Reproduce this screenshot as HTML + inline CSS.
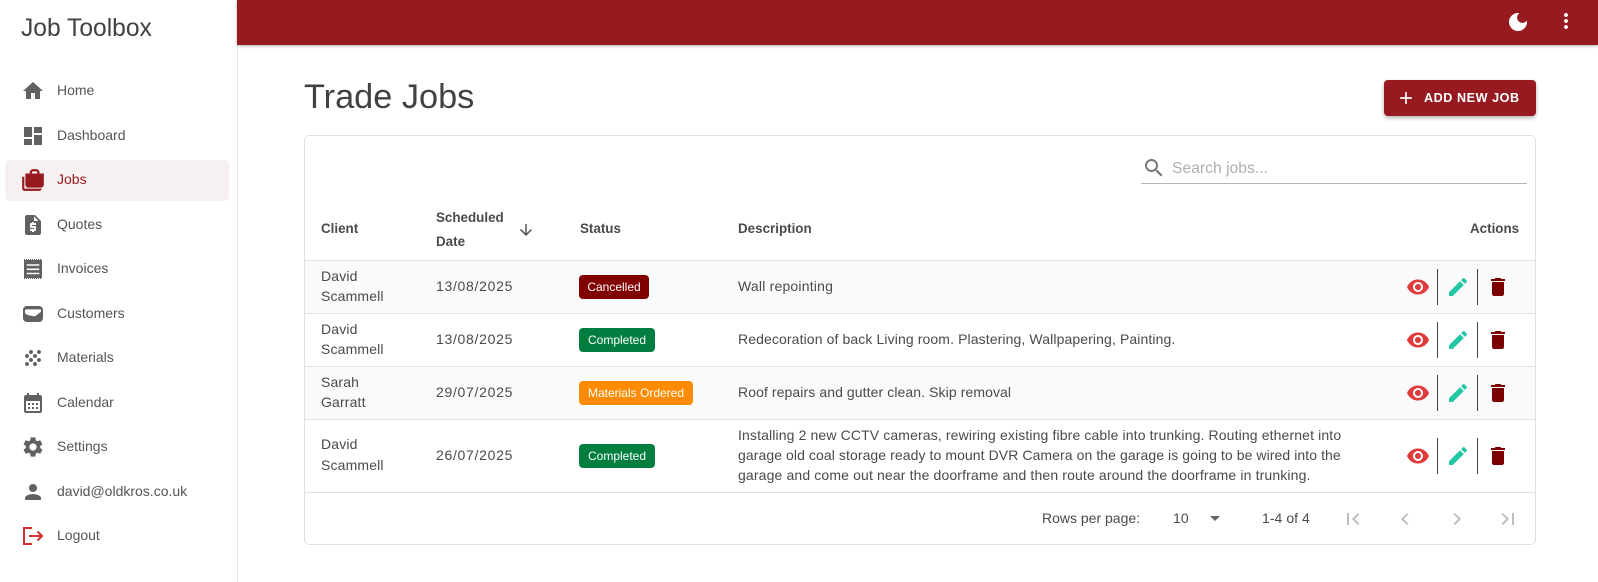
<!DOCTYPE html>
<html lang="en"><head><meta charset="utf-8"><title>Trade Jobs</title>
<style>
html,body{margin:0;padding:0;background:#fff}
body{position:relative;width:1598px;height:582px;overflow:hidden;font-family:"Liberation Sans",sans-serif;color:#424242}
.a,.t,svg{position:absolute}
.t{white-space:nowrap;line-height:20px;font-size:14px}
.n{left:57px;color:#555}
.c{letter-spacing:.15px;color:#4a4a4a}
.h{font-size:13.4px;font-weight:bold;color:#4a4a4a}
.b{height:24px;border-radius:4px;color:#fff;font-size:12px;line-height:24px;text-align:center;white-space:nowrap}
.l{left:305px;width:1230px;height:1px;background:#e0e0e0}
.d{width:1px;height:36px;background:#424242}
.s{background:#fafafa;left:305px;width:1230px}
</style></head><body>
<div class="a" style="left:237px;top:0;width:1px;height:582px;background:#e8e8e8"></div>
<div class="a" style="left:237px;top:0;width:1361px;height:45px;background:#961a1f;box-shadow:0 1px 3px rgba(0,0,0,.3)"></div>
<div class="t" style="left:21px;top:15px;font-size:24.6px;line-height:28px;color:#424242">Job Toolbox</div>
<div class="a" style="left:5px;top:160px;width:224px;height:41px;background:#f6f0f0;border-radius:5px"></div>

<svg style="left:21px;top:79px" width="24" height="24" viewBox="0 0 24 24" fill="#616161"><path d="M10 20v-6h4v6h5v-8h3L12 3 2 12h3v8z"/></svg>
<svg style="left:21px;top:124px" width="24" height="24" viewBox="0 0 24 24" fill="#616161"><path d="M3 13h8V3H3v10zm0 8h8v-6H3v6zm10 0h8V11h-8v10zm0-18v6h8V3h-8z"/></svg>
<svg style="left:20px;top:167px" width="26" height="26" viewBox="0 0 24 24" fill="#961a1f"><path d="M18 6V4l-2-2h-5L9 4v2H5v11s1 2 2 2h13s2-.98 2-2V6h-4zM4 9H2v11c0 1.11.89 2 2 2h14c1.11 0 2-.89 2-2H4V9zm7-4c0-.55.53-1 1-1h3c.46 0 1 .54 1 1v1h-5V5z"/></svg>
<svg style="left:21px;top:213px" width="24" height="24" viewBox="0 0 24 24" fill="#616161"><path d="M14 2H6c-1.1 0-1.99.9-1.99 2L4 20c0 1.1.89 2 1.99 2H18c1.1 0 2-.9 2-2V8l-6-6zm1 10h-4v1h3c.55 0 1 .45 1 1v3c0 .55-.45 1-1 1h-1v1h-2v-1H9v-2h4v-1h-3c-.55 0-1-.45-1-1v-3c0-.55.45-1 1-1h1V9h2v1h2v2zm-2-4V3.5L17.5 8H13z"/></svg>
<svg style="left:21px;top:257px" width="24" height="24" viewBox="0 0 24 24"><rect x="3" y="3" width="18" height="18" fill="#616161"/><path d="M3 2.5H21M3 21.5H21" stroke="#616161" stroke-width="1" stroke-dasharray="1 1" fill="none"/><path d="M5.7 8H18.3M5.7 12.3H18.3M5.7 16.5H18.3" stroke="#fff" stroke-width="1.6" fill="none"/></svg>
<svg style="left:21px;top:302px" width="24" height="24" viewBox="0 0 24 24"><rect x="2" y="4" width="20" height="16" rx="4" fill="#616161"/><path d="M4 8.4C4 7.6 4.6 7.4 5 7.4H19C19.5 7.4 20 7.7 20 8.4V9.6L14 14.4C9 13.6 4 13 4 10.4Z" fill="#fff"/></svg>
<svg style="left:21px;top:346px" width="24" height="24" viewBox="0 0 24 24" fill="#616161"><path d="M10 12c-1.1 0-2 .9-2 2s.9 2 2 2 2-.9 2-2-.9-2-2-2zM6 8c-1.1 0-2 .9-2 2s.9 2 2 2 2-.9 2-2-.9-2-2-2zm0 8c-1.1 0-2 .9-2 2s.9 2 2 2 2-.9 2-2-.9-2-2-2zm12-8c1.1 0 2-.9 2-2s-.9-2-2-2-2 .9-2 2 .9 2 2 2zm-4 8c-1.1 0-2 .9-2 2s.9 2 2 2 2-.9 2-2-.9-2-2-2zm4-4c-1.1 0-2 .9-2 2s.9 2 2 2 2-.9 2-2-.9-2-2-2zm-4-4c-1.1 0-2 .9-2 2s.9 2 2 2 2-.9 2-2-.9-2-2-2zm-4-4c-1.1 0-2 .9-2 2s.9 2 2 2 2-.9 2-2-.9-2-2-2z"/></svg>
<svg style="left:21px;top:391px" width="24" height="24" viewBox="0 0 24 24" fill="#616161"><path d="M19 4h-1V2h-2v2H8V2H6v2H5c-1.11 0-1.99.9-1.99 2L3 20c0 1.1.89 2 2 2h14c1.1 0 2-.9 2-2V6c0-1.1-.9-2-2-2zm0 16H5V10h14v10zM9 14H7v-2h2v2zm4 0h-2v-2h2v2zm4 0h-2v-2h2v2zm-8 4H7v-2h2v2zm4 0h-2v-2h2v2zm4 0h-2v-2h2v2z"/></svg>
<svg style="left:21px;top:435px" width="24" height="24" viewBox="0 0 24 24" fill="#616161"><path d="M19.14 12.94c.04-.3.06-.61.06-.94 0-.32-.02-.64-.07-.94l2.03-1.58c.18-.14.23-.41.12-.61l-1.92-3.32c-.12-.22-.37-.29-.59-.22l-2.39.96c-.5-.38-1.03-.7-1.62-.94l-.36-2.54c-.04-.24-.24-.41-.48-.41h-3.84c-.24 0-.43.17-.47.41l-.36 2.54c-.59.24-1.13.57-1.62.94l-2.39-.96c-.22-.08-.47 0-.59.22L2.74 8.87c-.12.21-.08.47.12.61l2.03 1.58c-.05.3-.09.63-.09.94s.02.64.07.94l-2.03 1.58c-.18.14-.23.41-.12.61l1.92 3.32c.12.22.37.29.59.22l2.39-.96c.5.38 1.03.7 1.62.94l.36 2.54c.05.24.24.41.48.41h3.84c.24 0 .44-.17.47-.41l.36-2.54c.59-.24 1.13-.56 1.62-.94l2.39.96c.22.08.47 0 .59-.22l1.92-3.32c.12-.22.07-.47-.12-.61l-2.01-1.58zM12 15.6c-1.98 0-3.6-1.62-3.6-3.6s1.62-3.6 3.6-3.6 3.6 1.62 3.6 3.6-1.62 3.6-3.6 3.6z"/></svg>
<svg style="left:21px;top:480px" width="24" height="24" viewBox="0 0 24 24" fill="#616161"><path d="M12 12c2.21 0 4-1.79 4-4s-1.79-4-4-4-4 1.79-4 4 1.79 4 4 4zm0 2c-2.67 0-8 1.34-8 4v2h16v-2c0-2.66-5.33-4-8-4z"/></svg>
<svg style="left:21px;top:524px" width="24" height="24" viewBox="0 0 24 24" fill="none" stroke="#d32f2f" stroke-width="2"><path d="M11 4H3V20H11M8 12H21M16.5 7.5L21 12L16.5 16.5"/></svg>

<div class="t n" style="top:80px">Home</div>
<div class="t n" style="top:125px">Dashboard</div>
<div class="t n" style="top:169px;color:#961a1f">Jobs</div>
<div class="t n" style="top:214px">Quotes</div>
<div class="t n" style="top:258px">Invoices</div>
<div class="t n" style="top:303px">Customers</div>
<div class="t n" style="top:347px">Materials</div>
<div class="t n" style="top:392px">Calendar</div>
<div class="t n" style="top:436px">Settings</div>
<div class="t n" style="top:481px">david@oldkros.co.uk</div>
<div class="t n" style="top:525px">Logout</div>

<svg style="left:1506px;top:10px" width="24" height="24" viewBox="0 0 24 24" fill="#fff"><path d="M12 3c-4.97 0-9 4.03-9 9s4.03 9 9 9 9-4.03 9-9c0-.46-.04-.92-.1-1.36-.98 1.37-2.58 2.26-4.4 2.26-2.98 0-5.4-2.42-5.4-5.4 0-1.81.89-3.42 2.26-4.4-.44-.06-.9-.1-1.36-.1z"/></svg>
<svg style="left:1554px;top:9px" width="24" height="24" viewBox="0 0 24 24" fill="#fff"><path d="M12 8c1.1 0 2-.9 2-2s-.9-2-2-2-2 .9-2 2 .9 2 2 2zm0 2c-1.1 0-2 .9-2 2s.9 2 2 2 2-.9 2-2-.9-2-2-2zm0 6c-1.1 0-2 .9-2 2s.9 2 2 2 2-.9 2-2-.9-2-2-2z"/></svg>

<div class="t" style="left:304px;top:77px;font-size:34.3px;line-height:40px;color:#424242">Trade Jobs</div>
<div class="a" style="left:1384px;top:80px;width:152px;height:36px;background:#961a1f;border-radius:4px;box-shadow:0 2px 4px rgba(0,0,0,.3)"></div>
<svg style="left:1396px;top:88px" width="20" height="20" viewBox="0 0 24 24" fill="#fff"><path d="M19 13h-6v6h-2v-6H5v-2h6V5h2v6h6v2z"/></svg>
<div class="t" style="left:1424px;top:88px;font-size:12.6px;font-weight:bold;color:#fff;letter-spacing:.55px">ADD NEW JOB</div>

<div class="a" style="left:304px;top:135px;width:1230px;height:408px;border:1px solid #e0e0e0;border-radius:5px"></div>
<svg style="left:1142px;top:156px" width="24" height="24" viewBox="0 0 24 24" fill="#757575"><path d="M15.5 14h-.79l-.28-.27C15.41 12.59 16 11.11 16 9.5 16 5.91 13.09 3 9.5 3S3 5.91 3 9.5 5.91 16 9.5 16c1.61 0 3.09-.59 4.23-1.57l.27.28v.79l5 4.99L20.49 19l-4.99-5zm-6 0C7.01 14 5 11.99 5 9.5S7.01 5 9.5 5 14 7.01 14 9.5 11.99 14 9.5 14z"/></svg>
<div class="t" style="left:1172px;top:159px;font-size:15.7px;color:#aeaeae">Search jobs...</div>
<div class="a" style="left:1141px;top:183px;width:386px;height:1px;background:#b5b5b5"></div>

<div class="t h" style="left:321px;top:219px">Client</div>
<div class="t h" style="left:436px;top:208px">Scheduled</div>
<div class="t h" style="left:436px;top:232px">Date</div>
<svg style="left:517px;top:221px" width="18" height="18" viewBox="0 0 24 24" fill="#555"><path d="M20 12l-1.41-1.41L13 16.17V4h-2v12.17l-5.58-5.59L4 12l8 8 8-8z"/></svg>
<div class="t h" style="left:580px;top:219px">Status</div>
<div class="t h" style="left:738px;top:219px">Description</div>
<div class="t h" style="left:1470px;top:219px">Actions</div>

<div class="a s" style="top:261px;height:53px"></div>
<div class="a s" style="top:367px;height:52px"></div>
<div class="a l" style="top:260px"></div>
<div class="a l" style="top:313px"></div>
<div class="a l" style="top:366px"></div>
<div class="a l" style="top:419px"></div>
<div class="a l" style="top:492px"></div>

<div class="t c" style="left:321px;top:266px">David</div><div class="t c" style="left:321px;top:286px">Scammell</div>
<div class="t c" style="left:436px;top:276px;letter-spacing:.7px">13/08/2025</div>
<div class="a b" style="left:579px;top:275px;width:70px;background:#800000">Cancelled</div>
<div class="t c" style="left:738px;top:276px;letter-spacing:.2px">Wall repointing</div>

<div class="t c" style="left:321px;top:319px">David</div><div class="t c" style="left:321px;top:339px">Scammell</div>
<div class="t c" style="left:436px;top:329px;letter-spacing:.7px">13/08/2025</div>
<div class="a b" style="left:579px;top:328px;width:76px;background:#007e3f">Completed</div>
<div class="t c" style="left:738px;top:329px;letter-spacing:.11px">Redecoration of back Living room. Plastering, Wallpapering, Painting.</div>

<div class="t c" style="left:321px;top:372px">Sarah</div><div class="t c" style="left:321px;top:392px">Garratt</div>
<div class="t c" style="left:436px;top:382px;letter-spacing:.7px">29/07/2025</div>
<div class="a b" style="left:579px;top:381px;width:114px;background:#ff8c00">Materials Ordered</div>
<div class="t c" style="left:738px;top:382px;letter-spacing:.09px">Roof repairs and gutter clean. Skip removal</div>

<div class="t c" style="left:321px;top:434px">David</div><div class="t c" style="left:321px;top:455px">Scammell</div>
<div class="t c" style="left:436px;top:445px;letter-spacing:.7px">26/07/2025</div>
<div class="a b" style="left:579px;top:444px;width:76px;background:#007e3f">Completed</div>
<div class="t c" style="left:738px;top:425px;letter-spacing:.13px">Installing 2 new CCTV cameras, rewiring existing fibre cable into trunking. Routing ethernet into</div>
<div class="t c" style="left:738px;top:445px;letter-spacing:.08px">garage old coal storage ready to mount DVR Camera on the garage is going to be wired into the</div>
<div class="t c" style="left:738px;top:465px;letter-spacing:.14px">garage and come out near the doorframe and then route around the doorframe in trunking.</div>

<svg width="0" height="0" style="left:0;top:0"><defs>
<symbol id="eye" viewBox="0 0 24 24"><path fill="#e03a3a" d="M12 4.5C7 4.5 2.73 7.61 1 12c1.73 4.39 6 7.5 11 7.5s9.27-3.11 11-7.5c-1.73-4.39-6-7.5-11-7.5zM12 17c-2.76 0-5-2.24-5-5s2.24-5 5-5 5 2.24 5 5-2.24 5-5 5zm0-8c-1.66 0-3 1.34-3 3s1.34 3 3 3 3-1.34 3-3-1.34-3-3-3z"/></symbol>
<symbol id="pen" viewBox="0 0 24 24"><path fill="#22c7a3" d="M3 17.25V21h3.75L17.81 9.94l-3.75-3.75L3 17.25zM20.71 7.04c.39-.39.39-1.02 0-1.41l-2.34-2.34c-.39-.39-1.02-.39-1.41 0l-1.83 1.83 3.75 3.75 1.83-1.83z"/></symbol>
<symbol id="bin" viewBox="0 0 24 24"><path fill="#7b0000" d="M6 19c0 1.1.9 2 2 2h8c1.1 0 2-.9 2-2V7H6v12zM19 4h-3.5l-1-1h-5l-1 1H5v2h14V4z"/></symbol>
</defs></svg>

<svg style="left:1406px;top:275px" width="24" height="24"><use href="#eye"/></svg><div class="a d" style="left:1437px;top:269px"></div>
<svg style="left:1446px;top:275px" width="24" height="24"><use href="#pen"/></svg><div class="a d" style="left:1477px;top:269px"></div>
<svg style="left:1486px;top:275px" width="24" height="24"><use href="#bin"/></svg>

<svg style="left:1406px;top:328px" width="24" height="24"><use href="#eye"/></svg><div class="a d" style="left:1437px;top:322px"></div>
<svg style="left:1446px;top:328px" width="24" height="24"><use href="#pen"/></svg><div class="a d" style="left:1477px;top:322px"></div>
<svg style="left:1486px;top:328px" width="24" height="24"><use href="#bin"/></svg>

<svg style="left:1406px;top:381px" width="24" height="24"><use href="#eye"/></svg><div class="a d" style="left:1437px;top:375px"></div>
<svg style="left:1446px;top:381px" width="24" height="24"><use href="#pen"/></svg><div class="a d" style="left:1477px;top:375px"></div>
<svg style="left:1486px;top:381px" width="24" height="24"><use href="#bin"/></svg>

<svg style="left:1406px;top:444px" width="24" height="24"><use href="#eye"/></svg><div class="a d" style="left:1437px;top:438px"></div>
<svg style="left:1446px;top:444px" width="24" height="24"><use href="#pen"/></svg><div class="a d" style="left:1477px;top:438px"></div>
<svg style="left:1486px;top:444px" width="24" height="24"><use href="#bin"/></svg>

<div class="t c" style="left:1042px;top:508px;letter-spacing:0">Rows per page:</div>
<div class="t c" style="left:1173px;top:508px">10</div>
<svg style="left:1203px;top:506px" width="24" height="24" viewBox="0 0 24 24" fill="#666"><path d="M7 10l5 5 5-5z"/></svg>
<div class="t c" style="left:1262px;top:508px;letter-spacing:.05px">1-4 of 4</div>
<svg style="left:1341px;top:507px" width="24" height="24" viewBox="0 0 24 24" fill="#bdbdbd"><path d="M18.41 16.59L13.82 12l4.59-4.59L17 6l-6 6 6 6zM6 6h2v12H6z"/></svg>
<svg style="left:1393px;top:507px" width="24" height="24" viewBox="0 0 24 24" fill="#bdbdbd"><path d="M15.41 16.59L10.83 12l4.58-4.59L14 6l-6 6 6 6 1.41-1.41z"/></svg>
<svg style="left:1445px;top:507px" width="24" height="24" viewBox="0 0 24 24" fill="#bdbdbd"><path d="M8.59 16.59L13.17 12 8.59 7.41 10 6l6 6-6 6-1.41-1.41z"/></svg>
<svg style="left:1496px;top:507px" width="24" height="24" viewBox="0 0 24 24" fill="#bdbdbd"><path d="M5.59 7.41L10.18 12l-4.59 4.59L7 18l6-6-6-6zM16 6h2v12h-2z"/></svg>
</body></html>
